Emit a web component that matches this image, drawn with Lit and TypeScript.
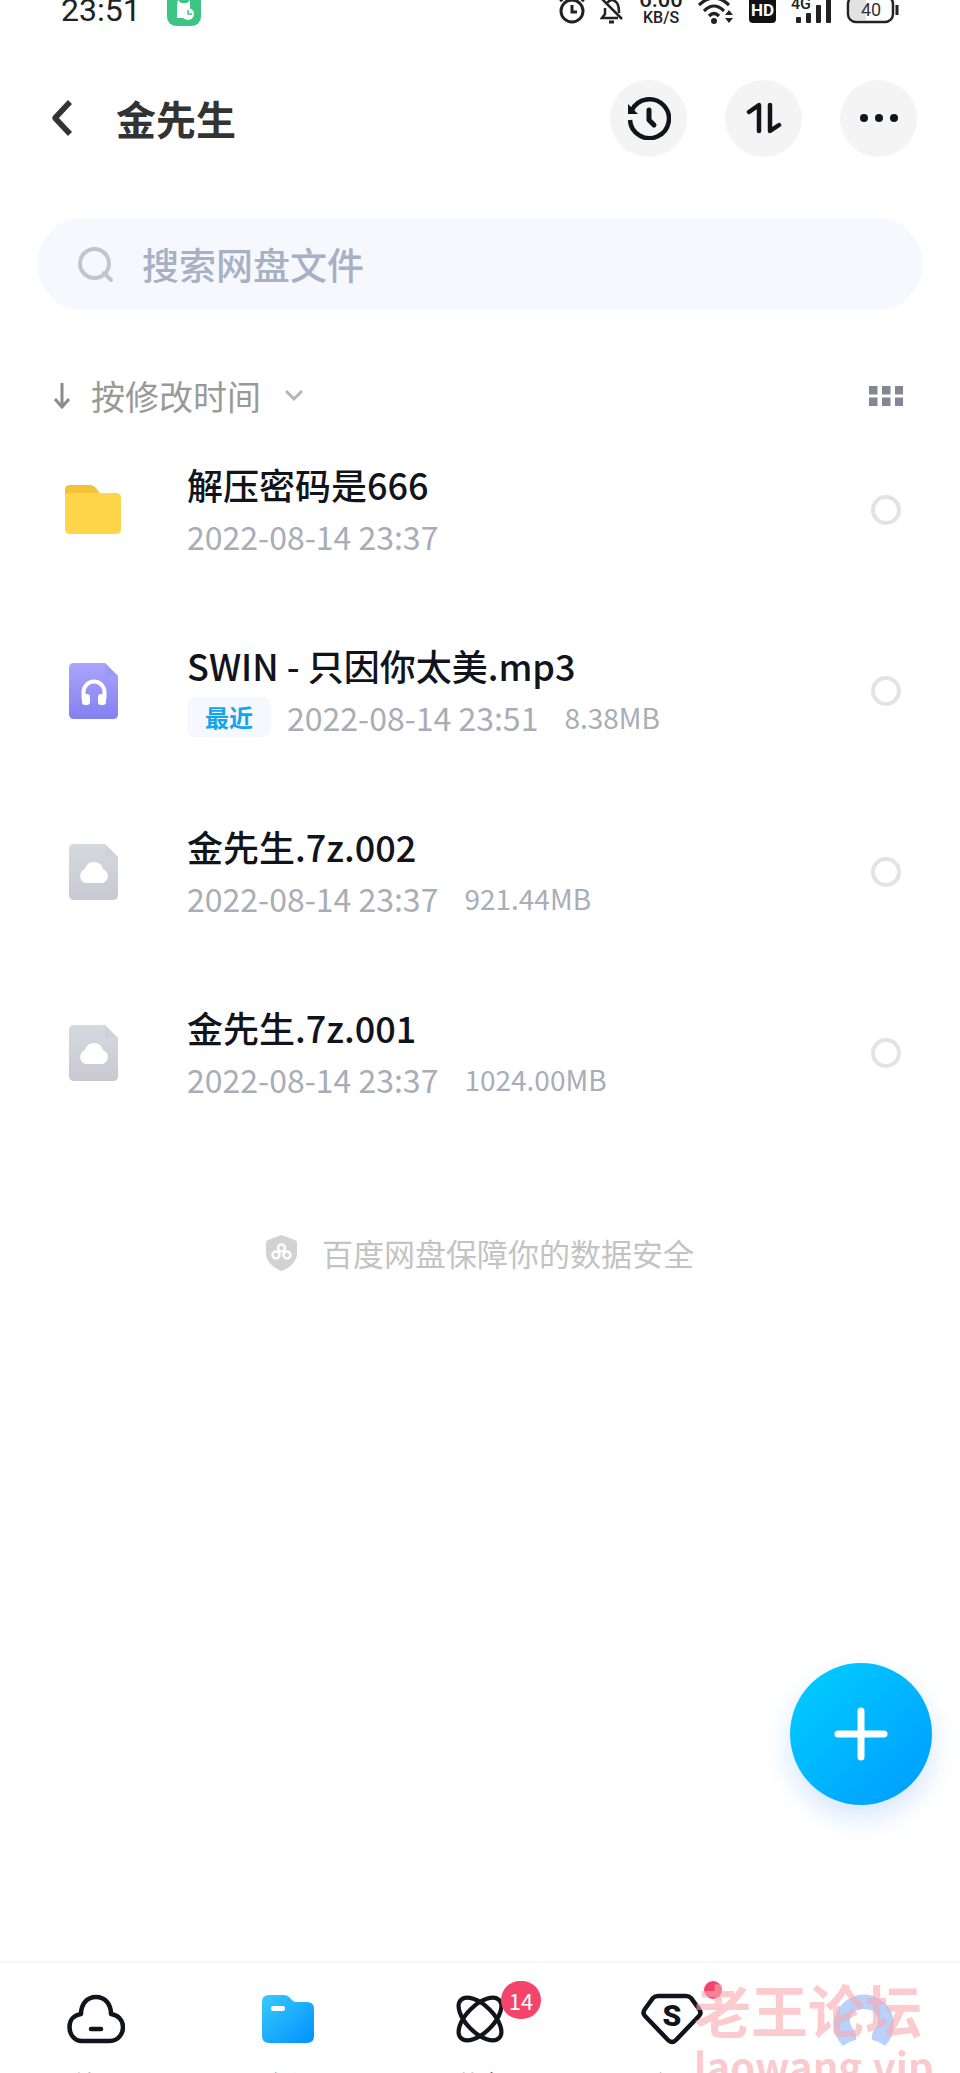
import { LitElement, html, css, svg, nothing } from "lit";
import { customElement, property } from "lit/decorators.js";

type Kind = "folder" | "audio" | "cloud";

interface FileItem {
  kind: Kind;
  name: string;
  time: string;
  size?: string;
  recent?: boolean;
}

const FILES: FileItem[] = [
  { kind: "folder", name: "解压密码是666", time: "2022-08-14 23:37" },
  { kind: "audio", name: "SWIN - 只因你太美.mp3", time: "2022-08-14 23:51", size: "8.38MB", recent: true },
  { kind: "cloud", name: "金先生.7z.002", time: "2022-08-14 23:37", size: "921.44MB" },
  { kind: "cloud", name: "金先生.7z.001", time: "2022-08-14 23:37", size: "1024.00MB" },
];

const docPath = "M5 0H36L49 13V51Q49 56 44 56H5Q0 56 0 51V5Q0 0 5 0Z";

const fileIcons = {
  folder: html`<svg width="56" height="49" viewBox="0 0 56 49">
    <path d="M5 0H25Q28 0 30 2L35 8L30 10H0V5Q0 0 5 0Z" fill="#f5c137" />
    <path d="M0 11Q0 8 5 8H51Q56 8 56 13V44Q56 49 51 49H5Q0 49 0 44Z" fill="#ffd64a" />
  </svg>`,
  audio: html`<svg width="49" height="56" viewBox="0 0 49 56">
    <defs><linearGradient id="g" x1="0" y1="0" x2="0" y2="1">
      <stop offset="0" stop-color="#a9a5fb" /><stop offset="1" stop-color="#8480f0" />
    </linearGradient></defs>
    <path d=${docPath} fill="url(#g)" />
    <path d="M36 0L49 13H40Q36 13 36 9Z" fill="#8f8bf0" opacity=".35" />
    <path d="M14.500 36V29A10.500 10.500 0 0 1 35.500 29V36" fill="none" stroke="#fff" stroke-width="4" />
    <rect x="13" y="31" width="8" height="11" rx="3" fill="#fff" />
    <rect x="29" y="31" width="8" height="11" rx="3" fill="#fff" />
  </svg>`,
  cloud: html`<svg width="49" height="56" viewBox="0 0 49 56">
    <defs><linearGradient id="g" x1="0" y1="0" x2="0" y2="1">
      <stop offset="0" stop-color="#d5dadf" /><stop offset="1" stop-color="#c8c8d2" />
    </linearGradient></defs>
    <path d=${docPath} fill="url(#g)" />
    <path d="M36 0L49 13H40Q36 13 36 9Z" fill="#c5cad0" opacity=".35" />
    <path d="M16 39A7.500 7.500 0 0 1 16 25Q18 18 25 18Q32 18 34 25A7.500 7.500 0 0 1 34 39Z" fill="#fff" />
  </svg>`,
};

@customElement("file-row")
export class FileRow extends LitElement {
  @property({ attribute: false }) item!: FileItem;

  static styles = css`
    :host { display: block; }
    .row { display: grid; grid-template-columns: 56px 1fr 30px; column-gap: 66px; align-items: center; height: 181px; padding: 0 59px 0 65px; }
    .icon { display: flex; justify-content: center; }
    .text { display: flex; flex-direction: column; gap: 4px; min-width: 0; }
    .name { margin: 0; font-size: 36px; font-weight: 500; line-height: 48px; color: #12141c; white-space: nowrap; }
    .meta { display: flex; align-items: center; height: 48px; line-height: 40px; color: #a9adb5; white-space: nowrap; }
    .tag { margin-right: 16px; padding: 0 18px; border-radius: 8px; background: #f6f8fd; color: #14a5ec; font-size: 24px; font-weight: 700; line-height: 40px; }
    .time { font-size: 32px; }
    .size { margin-left: 26px; font-size: 28px; }
    .pick { appearance: none; width: 30px; height: 30px; margin: 0; border: 4px solid #e3e3e4; border-radius: 50%; background: #fff; }
    .pick:checked { border-color: #14a5ec; }
  `;

  render() {
    const f = this.item;
    return html`<div class="row">
      <span class="icon">${fileIcons[f.kind]}</span>
      <div class="text">
        <h2 class="name">${f.name}</h2>
        <div class="meta">
          ${f.recent ? html`<span class="tag">最近</span>` : nothing}
          <span class="time">${f.time}</span>
          ${f.size ? html`<span class="size">${f.size}</span>` : nothing}
        </div>
      </div>
      <input class="pick" type="checkbox" aria-label=${f.name} />
    </div>`;
  }
}

@customElement("app-root")
export class AppRoot extends LitElement {
  static styles = css`
    * { box-sizing: border-box; }
    :host { display: block; font-family: "Noto Sans CJK SC", "Noto Sans", sans-serif; color: #12141c; }
    .page { position: relative; display: flex; flex-direction: column; height: 100vh; min-height: 1500px; overflow: hidden; background: #fff; }
    svg { display: block; flex: none; }
    button { border: 0; padding: 0; background: none; color: inherit; font: inherit; }

    .status { display: flex; align-items: flex-end; justify-content: space-between; height: 26px; padding: 0 61px; }
    .status-left { display: flex; align-items: flex-end; gap: 26px; }
    .clock { font-family: Roboto, sans-serif; font-size: 32px; line-height: 32px; color: #222; }
    .status-right { display: flex; align-items: flex-end; gap: 15px; }
    .speed { display: flex; flex-direction: column; align-items: center; width: 44px; font-family: Roboto, sans-serif; font-weight: 500; color: #222; }
    .rate { font-size: 22px; line-height: 20px; }
    .unit { font-size: 16px; line-height: 16px; }

    .header { display: flex; align-items: center; height: 184px; padding: 0 43px 0 50px; }
    .back { display: flex; width: 24px; margin-right: 42px; }
    .title { flex: 1; margin: 0; font-size: 40px; font-weight: 700; line-height: 56px; color: #333; }
    .actions { display: flex; gap: 38px; }
    .round { display: flex; align-items: center; justify-content: center; width: 77px; height: 77px; border-radius: 50%; background: #f4f4f5; }

    .search { display: flex; align-items: center; gap: 29px; height: 92px; margin: 8px 37px 0; padding: 0 41px; border-radius: 46px; background: #f7f8fd; }
    .search-input { flex: 1; min-width: 0; border: 0; padding: 0; outline: 0; background: none; font: inherit; font-size: 37px; font-weight: 500; color: #333; }
    .search-input::placeholder { color: #a6b1c6; opacity: 1; }

    .toolbar { display: flex; align-items: center; justify-content: space-between; height: 56px; margin-top: 58px; padding: 0 57px 0 54px; }
    .sort { display: flex; align-items: center; font-size: 34px; line-height: 56px; color: #999; }
    .sort-label { margin: 0 24px 0 21px; }

    .files { margin: -5px 0 0; padding: 0; list-style: none; }
    .note { display: flex; align-items: center; justify-content: center; gap: 25px; margin: 88px 0 0; font-size: 31px; line-height: 44px; color: #c3c3c3; }

    .add { position: absolute; right: 28px; bottom: 268px; display: flex; align-items: center; justify-content: center; width: 142px; height: 142px; border-radius: 50%; background: linear-gradient(135deg, #00cdff 5%, #009dff 95%); box-shadow: 0 12px 28px rgba(40, 130, 255, 0.2); }

    .nav { display: grid; grid-template-columns: repeat(5, 1fr); flex: none; height: 112px; margin-top: auto; border-top: 2px solid #f7f7f7; background: #fff; overflow: hidden; }
    .tab { display: flex; flex-direction: column; align-items: center; gap: 20px; padding-top: 28px; color: #333; text-decoration: none; font-size: 24px; line-height: 32px; }
    .active { color: #14a5ec; }
    .glyph { position: relative; display: flex; align-items: center; justify-content: center; width: 64px; height: 56px; }
    .badge { position: absolute; left: 53px; top: -10px; display: flex; align-items: center; justify-content: center; width: 40px; height: 38px; border-radius: 20px; background: #f5446c; color: #fff; font-size: 22px; line-height: 38px; }
    .dot { position: absolute; left: 64px; top: -10px; width: 18px; height: 18px; border-radius: 50%; background: #f5446c; }

    .mark { position: absolute; left: calc(100% - 266px); bottom: -18px; display: flex; flex-direction: column; color: rgba(248, 168, 174, 0.6); font-weight: 700; white-space: nowrap; pointer-events: none; }
    .mark-name { font-size: 57px; line-height: 62px; }
    .mark-site { font-size: 40px; line-height: 52px; }
  `;

  private statusBar() {
    return html`<div class="status">
      <div class="status-left">
        <span class="clock">23:51</span>
        <svg width="34" height="34" viewBox="0 0 34 34">
          <rect width="34" height="34" rx="9" fill="#3cc583" />
          <path d="M11 8L14 11H20L23 8V16A7 7 0 0 0 17 26H10V12Z" fill="#fff" />
          <circle cx="21" cy="22" r="6" fill="#fff" />
          <path d="M21 18V22H25" fill="none" stroke="#3cc583" stroke-width="1.500" />
        </svg>
      </div>
      <div class="status-right">
        <svg width="26" height="30" viewBox="0 0 26 30" fill="none" stroke="#222" stroke-width="3">
          <circle cx="13" cy="15" r="11" /><path d="M13 9V16H18M1 5L6 1M25 5L20 1" />
        </svg>
        <svg width="24" height="30" viewBox="0 0 24 30" fill="none" stroke="#222" stroke-width="2.500">
          <path d="M7 7Q12 1 17 7Q19 10 19 17M5 12V18L2 22H18M2 3L22 23" /><path d="M9 26H14" stroke-width="3" />
        </svg>
        <div class="speed"><span class="rate">6.00</span><span class="unit">KB/S</span></div>
        <svg width="36" height="30" viewBox="0 0 36 30" fill="none" stroke="#222" stroke-width="3.200">
          <path d="M1 9Q16 -5 31 9M6 15Q16 5 26 15M11 20Q16 15 21 20" />
          <circle cx="16" cy="25" r="3" fill="#222" stroke="none" />
          <path d="M27 19L31 14L35 19ZM27 22L31 27L35 22Z" fill="#222" stroke="none" />
        </svg>
        <svg width="27" height="32" viewBox="0 0 27 32">
          <rect width="27" height="29" rx="4" fill="#111" />
          <text x="13.500" y="22" text-anchor="middle" font-family="Roboto" font-size="17" font-weight="700" fill="#fff">HD</text>
        </svg>
        <svg width="40" height="32" viewBox="0 0 40 32" fill="#222">
          <text x="0" y="15" font-family="Roboto" font-size="16" font-weight="500">4G</text>
          <rect x="5" y="23" width="5" height="6" rx="1" /><rect x="15" y="19" width="5" height="10" rx="1" />
          <rect x="25" y="11" width="5" height="18" rx="1" /><rect x="35" y="1" width="5" height="28" rx="1" />
        </svg>
        <svg width="53" height="32" viewBox="0 0 53 32">
          <rect x="2" y="2" width="45" height="26" rx="8" fill="#fff" stroke="#222" stroke-width="2.500" />
          <path d="M10 4H20V26H10Q4 26 4 20V10Q4 4 10 4Z" fill="#e2e2e2" />
          <path d="M51 11V21" stroke="#222" stroke-width="3" />
          <text x="25" y="22" text-anchor="middle" font-family="Roboto" font-size="18" fill="#333">40</text>
        </svg>
      </div>
    </div>`;
  }

  private tabs() {
    const ink = "#12141c";
    return html`<nav class="nav">
      <a class="tab" href="#home"><span class="glyph">
        <svg width="58" height="50" viewBox="0 0 58 50" fill="none" stroke=${ink} stroke-width="4.500" stroke-linejoin="round">
          <path d="M15 47H43C51 47 56 40 56 33C56 26 51 21 44 20C44 10 38 3 29 3C20 3 14 10 14 20C7 21 2.500 26 2.500 33C2.500 40 7 47 15 47Z" />
          <path d="M24 35H34" stroke-linecap="round" />
        </svg></span><span>首页</span></a>
      <a class="tab active" href="#files" aria-current="page"><span class="glyph">
        <svg width="52" height="48" viewBox="0 0 52 48">
          <defs><linearGradient id="f" x1="0" y1="0" x2="1" y2="1">
            <stop offset="0" stop-color="#38cbfa" /><stop offset="1" stop-color="#0090ff" />
          </linearGradient></defs>
          <path d="M7 0H22Q25 0 27 2L31 6Q32 7 35 7H45Q52 7 52 14V41Q52 48 45 48H7Q0 48 0 41V7Q0 0 7 0Z" fill="url(#f)" />
          <rect x="9" y="11" width="14" height="5" rx="2" fill="#fff" />
        </svg></span><span>文件</span></a>
      <a class="tab" href="#share"><span class="glyph">
        <svg width="48" height="48" viewBox="0 0 48 48" fill="none" stroke=${ink} stroke-width="4.200">
          <ellipse cx="24" cy="24" rx="27" ry="13.500" transform="rotate(45 24 24)" />
          <ellipse cx="24" cy="24" rx="27" ry="13.500" transform="rotate(-45 24 24)" />
        </svg><span class="badge">14</span></span><span>共享</span></a>
      <a class="tab" href="#vip"><span class="glyph">
        <svg width="62" height="52" viewBox="0 0 62 52">
          <path d="M17 3H45Q48 3 50 5L58 16Q61 20 58 23L35 47Q31 51 27 47L4 23Q1 20 4 16L12 5Q14 3 17 3Z" fill="none" stroke=${ink} stroke-width="4.500" />
          <text x="31" y="33" text-anchor="middle" font-family="Roboto" font-size="30" font-weight="900" fill=${ink}>S</text>
        </svg><span class="dot"></span></span><span>会员</span></a>
      <a class="tab" href="#me" aria-label="我的"><span class="glyph">
        <svg width="60" height="54" viewBox="0 0 60 54">
          <path d="M9 54A30 30 0 1 1 51 54Q44 49 38 48Q37 43 40 38Q46 32 43 24Q40 17 30 17Q20 17 17 24Q14 32 20 38Q23 43 22 48Q16 49 9 54Z" fill="#b8d2fc" />
        </svg></span></a>
    </nav>`;
  }

  render() {
    return html`<div class="page">
      ${this.statusBar()}
      <header class="header">
        <button class="back" aria-label="返回">
          <svg width="24" height="36" viewBox="0 0 24 36" fill="none" stroke="#333" stroke-width="5.500" stroke-linejoin="round"><path d="M20 2L5 18L20 34" /></svg>
        </button>
        <h1 class="title">金先生</h1>
        <div class="actions">
          <button class="round" aria-label="历史">
            <svg width="44" height="44" viewBox="0 0 44 44" fill="none" stroke="#12141c" stroke-width="4.500">
              <path d="M5 14A19.500 19.500 0 1 1 3 24" /><path d="M1 8V18H11Z" fill="#12141c" stroke="none" />
              <path d="M22 14V24L27 29" stroke-width="5" stroke-linecap="round" stroke-linejoin="round" />
            </svg>
          </button>
          <button class="round" aria-label="传输">
            <svg width="36" height="32" viewBox="0 0 36 32" fill="none" stroke="#12141c" stroke-width="4.500" stroke-linecap="round" stroke-linejoin="round">
              <path d="M3 10L13 3V29" /><path d="M24 3V29L33 23" />
            </svg>
          </button>
          <button class="round" aria-label="更多">
            <svg width="38" height="8" viewBox="0 0 38 8" fill="#12141c"><circle cx="4" cy="4" r="4" /><circle cx="19" cy="4" r="4" /><circle cx="34" cy="4" r="4" /></svg>
          </button>
        </div>
      </header>
      <label class="search">
        <svg width="35" height="35" viewBox="0 0 35 35" fill="none" stroke="#c3c5c9" stroke-width="4"><circle cx="16.500" cy="16.500" r="14.500" /><path d="M26 26L33 33" stroke-linecap="round" /></svg>
        <input class="search-input" type="search" placeholder="搜索网盘文件" aria-label="搜索网盘文件" />
      </label>
      <div class="toolbar">
        <button class="sort">
          <svg width="16" height="26" viewBox="0 0 16 26" fill="none" stroke="#8c8c8c" stroke-width="3"><path d="M8 0V24M1 16L8 24L15 16" /></svg>
          <span class="sort-label">按修改时间</span>
          <svg width="18" height="12" viewBox="0 0 18 12" fill="none" stroke="#b5b5b5" stroke-width="3"><path d="M1 1L9 9L17 1" /></svg>
        </button>
        <button aria-label="网格">
          <svg width="34" height="20" viewBox="0 0 34 20" fill="#858593">
            ${[0, 13, 26].map((x) => svg`<rect x=${x} y="0" width="8.500" height="8.500" /><rect x=${x} y="11.500" width="8.500" height="8.500" />`)}
          </svg>
        </button>
      </div>
      <ul class="files">${FILES.map((f) => html`<li><file-row .item=${f}></file-row></li>`)}</ul>
      <p class="note">
        <svg width="31" height="36" viewBox="0 0 31 36">
          <path d="M15.500 0L29 5Q31 6 31 8V19Q30 30 15.500 36Q1 30 0 19V8Q0 6 2 5Z" fill="#d2d2d2" />
          <g fill="none" stroke="#fff" stroke-width="2.500"><circle cx="15.500" cy="13" r="3.500" /><circle cx="10" cy="20" r="3.500" /><circle cx="21" cy="20" r="3.500" /></g>
        </svg>
        <span>百度网盘保障你的数据安全</span>
      </p>
      ${this.tabs()}
      <button class="add" aria-label="添加">
        <svg width="54" height="54" viewBox="0 0 54 54" stroke="#fff" stroke-width="7" stroke-linecap="round"><path d="M27 4V50M4 27H50" /></svg>
      </button>
      <div class="mark"><span class="mark-name">老王论坛</span><span class="mark-site">laowang.vip</span></div>
    </div>`;
  }
}
